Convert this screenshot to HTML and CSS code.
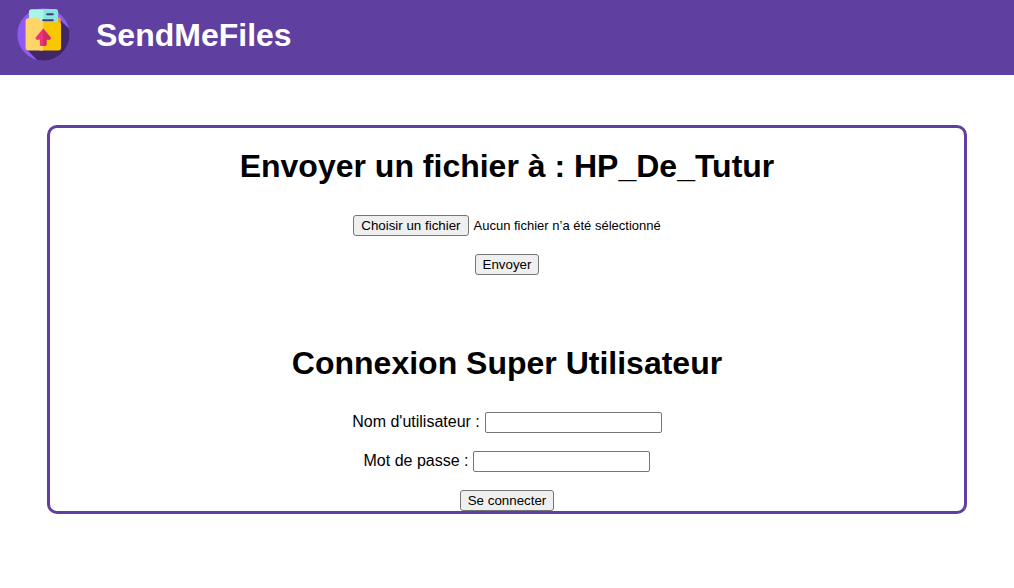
FILE: index.html
```html
<!DOCTYPE html>
<html lang="fr">
<head>
  <meta charset="utf-8">
  <meta name="viewport" content="width=device-width, initial-scale=1">
  <title>SendMeFiles</title>
  <link rel="stylesheet" href="styles.css">
</head>
<body>
  <header class="topbar">
    <svg class="logo" viewBox="0 0 160 160" aria-hidden="true">
      <defs>
        <clipPath id="disc"><circle cx="80" cy="80" r="79"/></clipPath>
      </defs>
      <circle cx="80" cy="80" r="79" fill="#8c5cf2"/>
      <path clip-path="url(#disc)" fill="#412668" d="M30 126 L68 164 H164 V70 L124 30 Z"/>
      <path fill="#ff9811" d="M100 28h24q8 0 8 8v30h-32z"/>
      <path fill="#a9f6e8" d="M44 4h72q8 0 8 8v62H36V12q0-8 8-8z"/>
      <path fill="#86e5dc" d="M80 4h36q8 0 8 8v62H80z"/>
      <path stroke="#4c3577" stroke-width="6" stroke-linecap="round" d="M91 19h17M79 37h29"/>
      <path fill="#fac600" d="M68 43h57q8 0 8 8v69q0 8-8 8H68z"/>
      <path fill="#ffd567" d="M34 31h26q5 0 8 4l5 5q2 2 6 3v85H34q-8 0-8-8V39q0-8 8-8z"/>
      <path fill="#e83776" d="M79 62 L101 88q3 7-4 8h-8v14q0 5-5 5H74q-5 0-5-5V96h-8q-7-1-4-8z"/>
      <path fill="#d32a67" d="M79 62 L101 88q3 7-4 8h-8v14q0 5-5 5h-5z"/>
    </svg>
    <h1 class="title">SendMeFiles</h1>
  </header>
  <main class="panel">
    <form class="form">
      <h2 class="title">Envoyer un fichier à : HP_De_Tutur</h2>
      <div class="field">
        <input class="file-input" id="file" type="file" aria-label="Fichier" hidden>
        <button class="button" id="choose" type="button">Choisir un fichier</button>
        <output class="file-name" id="file-name" for="file">Aucun fichier n’a été sélectionné</output>
      </div>
      <button class="button" type="submit">Envoyer</button>
    </form>
    <form class="form">
      <h2 class="title">Connexion Super Utilisateur</h2>
      <div class="field">
        <label for="username">Nom d'utilisateur :</label>
        <input class="textbox" id="username" name="username" type="text">
      </div>
      <div class="field">
        <label for="password">Mot de passe :</label>
        <input class="textbox" id="password" name="password" type="password">
      </div>
      <button class="button" type="submit">Se connecter</button>
    </form>
  </main>
  <script src="script.js"></script>
</body>
</html>
```
FILE: styles.css
```css
* {
  box-sizing: border-box;
}

body {
  margin: 0;
  background: #fff;
  color: #000;
  font: 16px/18px "Liberation Sans", Arial, sans-serif;
}

.topbar {
  display: flex;
  align-items: center;
  gap: 26px;
  padding: 8px 17px 14px;
  background: #5f3f9f;
  color: #fff;
}

.logo {
  width: 53px;
  height: 53px;
}

.title {
  margin: 0;
  font-size: 32px;
  line-height: 36px;
  font-weight: bold;
}

.panel {
  display: flex;
  flex-direction: column;
  gap: 70px;
  margin: 50px 47px;
  padding-top: 20px;
  border: 3px solid #5f3f9f;
  border-radius: 10px;
}

.form {
  display: flex;
  flex-direction: column;
  align-items: center;
  gap: 18px;
  text-align: center;
}

.form .title {
  margin-bottom: 13px;
}

.field {
  display: flex;
  align-items: baseline;
  justify-content: center;
  gap: 5px;
}

.button {
  height: 21px;
  padding: 0 7px;
  border: 1px solid #767676;
  border-radius: 3px;
  background: #efefef;
  color: #000;
  font-family: "Liberation Sans", Arial, sans-serif;
}

.file-name {
  font-size: 13px;
}

.textbox {
  width: 177px;
  height: 21px;
  padding: 1px 2px;
  border: 1px solid #767676;
  border-radius: 2px;
  background: #fff;
  font-family: "Liberation Sans", Arial, sans-serif;
}
```
FILE: script.js
```js
const input = document.getElementById("file");
const fileName = document.getElementById("file-name");
const emptyText = fileName.textContent;

document.getElementById("choose").addEventListener("click", () => input.click());
input.addEventListener("change", () => {
  fileName.textContent = input.files.length ? input.files[0].name : emptyText;
});
```
